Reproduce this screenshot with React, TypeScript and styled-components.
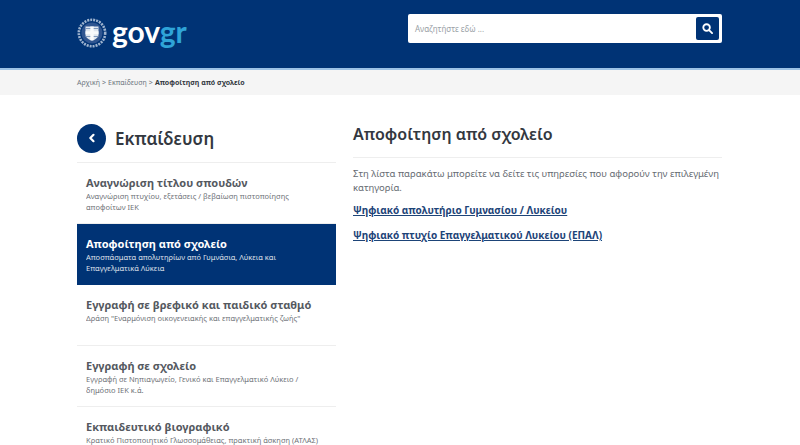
import React from "react";
import styled, { createGlobalStyle } from "styled-components";

const menu = [
  {
    title: "Αναγνώριση τίτλου σπουδών",
    text: "Αναγνώριση πτυχίου, εξετάσεις / βεβαίωση πιστοποίησης αποφοίτων ΙΕΚ",
  },
  {
    title: "Αποφοίτηση από σχολείο",
    text: "Αποσπάσματα απολυτηρίων από Γυμνάσια, Λύκεια και Επαγγελματικά Λύκεια",
    active: true,
  },
  {
    title: "Εγγραφή σε βρεφικό και παιδικό σταθμό",
    text: 'Δράση "Εναρμόνιση οικογενειακής και επαγγελματικής ζωής"',
  },
  {
    title: "Εγγραφή σε σχολείο",
    text: "Εγγραφή σε Νηπιαγωγείο, Γενικό και Επαγγελματικό Λύκειο / δημόσιο ΙΕΚ κ.ά.",
  },
  {
    title: "Εκπαιδευτικό βιογραφικό",
    text: "Κρατικό Πιστοποιητικό Γλωσσομάθειας, πρακτική άσκηση (ΑΤΛΑΣ) κ.ά.",
  },
];

function Emblem() {
  return (
    <svg width="30" height="30" viewBox="0 0 30 30">
      <circle cx="15" cy="15" r="13.2" fill="none" stroke="#9fb4cf" strokeWidth="2.6" strokeDasharray="2 1" />
      <circle cx="15" cy="15" r="10.6" fill="#2f5590" />
      <path d="M8.5 8.5h13v8c0 3.2-3 5-6.5 6.2-3.500-1.200-6.500-3-6.500-6.200z" fill="#dfe6ef" />
      <path d="M13.300 8.500h3.400v4.700h4.800v3h-4.800v6h-3.400v-6h-4.800v-3h4.800z" fill="#f8fafc" />
      <path d="M8.500 10.500h4.800M16.700 10.500h4.800M8.500 18.500h4.800M16.700 18.500h4.800" stroke="#7f98bb" strokeWidth="1" />
    </svg>
  );
}

export default function App() {
  return (
    <>
      <GlobalStyle />
      <Header>
        <HeaderInner>
          <Logo>
            <Emblem />
            <LogoText>
              gov<LogoAccent>gr</LogoAccent>
            </LogoText>
          </Logo>
          <Search>
            <SearchText>Αναζητήστε εδώ ...</SearchText>
            <SearchButton>
              <svg width="11" height="11" viewBox="0 0 12 12" fill="none" stroke="#fff" strokeWidth="2" strokeLinecap="round">
                <circle cx="5" cy="5" r="3.6" />
                <path d="M8 8l3 3" />
              </svg>
            </SearchButton>
          </Search>
        </HeaderInner>
      </Header>
      <Crumbs>
        <CrumbsInner>
          <Crumb>Αρχική</Crumb>
          <Sep>&gt;</Sep>
          <Crumb>Εκπαίδευση</Crumb>
          <Sep>&gt;</Sep>
          <CrumbCurrent>Αποφοίτηση από σχολείο</CrumbCurrent>
        </CrumbsInner>
      </Crumbs>
      <Main>
        <Side>
          <SideHead>
            <BackButton>
              <svg width="10" height="10" viewBox="0 0 10 10" fill="none" stroke="#fff" strokeWidth="2.2" strokeLinecap="round" strokeLinejoin="round">
                <path d="M6.500 1.800L3.300 5l3.200 3.200" />
              </svg>
            </BackButton>
            <SideTitle>Εκπαίδευση</SideTitle>
          </SideHead>
          {menu.map((item) => (
            <MenuItem key={item.title} $active={item.active}>
              <MenuTitle>{item.title}</MenuTitle>
              <MenuText>{item.text}</MenuText>
            </MenuItem>
          ))}
        </Side>
        <Content>
          <Heading>Αποφοίτηση από σχολείο</Heading>
          <Intro>
            Στη λίστα παρακάτω μπορείτε να δείτε τις υπηρεσίες που αφορούν την επιλεγμένη κατηγορία.
          </Intro>
          <ServiceLink>Ψηφιακό απολυτήριο Γυμνασίου / Λυκείου</ServiceLink>
          <ServiceLink>Ψηφιακό πτυχίο Επαγγελματικού Λυκείου (ΕΠΑΛ)</ServiceLink>
        </Content>
      </Main>
    </>
  );
}

const GlobalStyle = createGlobalStyle`
  html, body {
    margin: 0;
    height: 445px;
    overflow: hidden;
    background: #fff;
    font-family: "Noto Sans", "DejaVu Sans", sans-serif;
  }
`;

const Header = styled.header`
  height: 68px;
  background: #003375;
  border-bottom: 2px solid #9cc3e6;
`;

const HeaderInner = styled.div`
  width: 645px;
  height: 100%;
  margin-left: 77px;
  display: flex;
  align-items: flex-start;
  justify-content: space-between;
`;

const Logo = styled.div`
  display: flex;
  align-items: center;
  gap: 5px;
  margin-top: 18px;
`;

const LogoText = styled.div`
  font-family: "Lato", sans-serif;
  font-size: 30px;
  font-weight: 700;
  line-height: 30px;
  color: #fff;
  margin-top: -4px;
`;

const LogoAccent = styled.span`
  color: #2fa4d8;
`;

const Search = styled.div`
  width: 314px;
  height: 29px;
  margin-top: 14px;
  box-sizing: border-box;
  background: #fff;
  border-radius: 2px;
  display: flex;
  align-items: center;
  justify-content: space-between;
  padding: 0 3px 0 7px;
`;

const SearchText = styled.span`
  font-size: 8px;
  color: #9a9fa6;
`;

const SearchButton = styled.div`
  width: 23px;
  height: 23px;
  background: #003375;
  border-radius: 2px;
  display: flex;
  align-items: center;
  justify-content: center;
`;

const Crumbs = styled.nav`
  height: 25px;
  background: #f5f5f5;
`;

const CrumbsInner = styled.div`
  margin-left: 77px;
  height: 100%;
  display: flex;
  align-items: center;
  gap: 2px;
  font-size: 7px;
`;

const Crumb = styled.span`
  color: #6f7680;
`;

const Sep = styled.span`
  color: #6f7680;
`;

const CrumbCurrent = styled.span`
  color: #33383f;
  font-weight: 700;
`;

const Main = styled.main`
  margin-left: 77px;
  width: 645px;
  display: grid;
  grid-template-columns: 259px 369px;
  column-gap: 17px;
`;

const Side = styled.aside`
  padding-top: 28px;
`;

const SideHead = styled.div`
  display: flex;
  align-items: center;
  gap: 9px;
  height: 30px;
  padding-bottom: 9px;
  border-bottom: 1px solid #eeeeee;
`;

const BackButton = styled.div`
  width: 29px;
  height: 29px;
  border-radius: 50%;
  background: #003375;
  display: flex;
  align-items: center;
  justify-content: center;
`;

const SideTitle = styled.h2`
  margin: 0;
  font-size: 17px;
  font-weight: 600;
  color: #33383f;
`;

const MenuItem = styled.div<{ $active?: boolean }>`
  box-sizing: border-box;
  height: 61px;
  padding: 12px 9px 0;
  background: ${(p) => (p.$active ? "#003375" : "#fff")};
  border-bottom: 1px solid ${(p) => (p.$active ? "#003375" : "#eeeeee")};
  color: ${(p) => (p.$active ? "#fff" : "#55595f")};
`;

const MenuTitle = styled.div`
  font-size: 11px;
  font-weight: 700;
  line-height: 15px;
`;

const MenuText = styled.div`
  font-size: 7.5px;
  line-height: 11px;
  margin-top: 1px;
  opacity: 0.85;
`;

const Content = styled.section`
  padding-top: 28px;
`;

const Heading = styled.h1`
  margin: 0;
  font-size: 16px;
  font-weight: 600;
  line-height: 22px;
  height: 34px;
  border-bottom: 1px solid #eeeeee;
  color: #33383f;
`;

const Intro = styled.p`
  margin: 9px 0 8px;
  font-size: 9.500px;
  line-height: 14px;
  color: #666b72;
`;

const ServiceLink = styled.a`
  display: block;
  font-size: 10px;
  font-weight: 700;
  line-height: 14px;
  margin-bottom: 11px;
  color: #1d4478;
  text-decoration: underline;
`;
